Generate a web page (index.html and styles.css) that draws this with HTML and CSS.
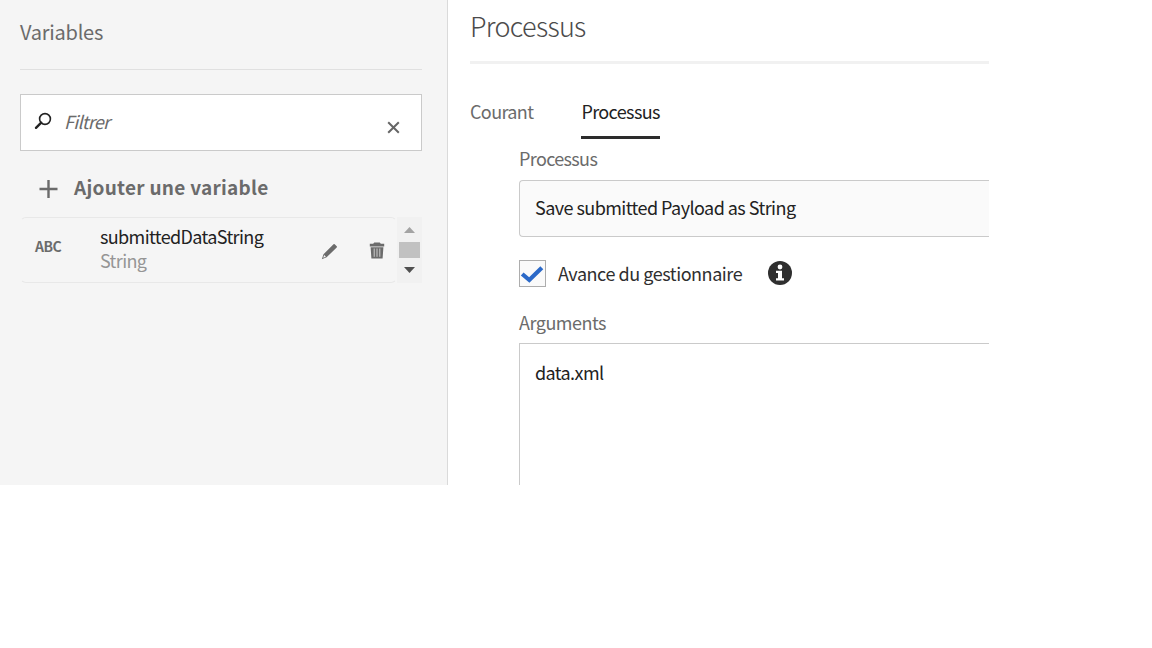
FILE: index.html
```html
<!DOCTYPE html>
<html lang="fr">
<head>
<meta charset="utf-8">
<title>Processus</title>
<link rel="stylesheet" href="styles.css">
</head>
<body>
<div class="app">
  <aside class="sidebar">
    <h2 class="sidebar-title"><span>Variables</span></h2>
    <div class="filter">
      <svg class="search-icon" width="18" height="18" viewBox="0 0 18 18"><circle cx="11" cy="7" r="5.4" fill="none" stroke="#222" stroke-width="1.6"/><path d="M7.2 10.7 2 15.8" stroke="#222" stroke-width="2.4" stroke-linecap="round"/></svg>
      <span class="filter-text">Filtrer</span>
      <svg class="clear-icon" width="13" height="13" viewBox="0 0 13 13"><path d="M1.2 1.2 11.8 11.8M11.8 1.2 1.2 11.8" stroke="#666" stroke-width="2"/></svg>
    </div>
    <button class="add"><svg width="20" height="20" viewBox="0 0 20 20"><path d="M10.5 1V19M1.5 10H19.5" stroke="#6b6b6b" stroke-width="2.4"/></svg><span>Ajouter une variable</span></button>
    <div class="list">
      <div class="item">
        <span class="type">ABC</span>
        <div class="names"><span class="name">submittedDataString</span><span class="kind">String</span></div>
        <svg class="edit" width="17" height="17" viewBox="0 0 17 17"><path fill="#6b6b6b" fill-rule="evenodd" d="M12.5 1.2q.6-.6 1.2 0l2 2q.6.6 0 1.2L5.6 14.3.8 16.2l1.7-5ZM3.2 12l-1 2.8 2.7-1.1Z"/></svg>
        <svg class="trash" width="16" height="17" viewBox="0 0 16 17"><path fill="#6b6b6b" d="M5.2.5h5.6l1 1.3h3.4v2.7H.8V1.8h3.4ZM1.6 5.2h12.8l-.8 11.3H2.4Z"/><path d="M5.2 6.5V14.8M8 6.5V14.8M10.8 6.5V14.8" stroke="#ccc" stroke-width="1"/></svg>
      </div>
      <div class="scrollbar">
        <svg width="11" height="6" viewBox="0 0 11 6"><path fill="#a3a3a3" d="M5.5 0 11 6H0Z"/></svg>
        <div class="thumb"></div>
        <svg width="11" height="6" viewBox="0 0 11 6"><path fill="#505050" d="M0 0H11L5.5 6Z"/></svg>
      </div>
    </div>
  </aside>
  <main class="main">
    <h1 class="title"><span>Processus</span></h1>
    <nav class="tabs"><a class="tab first">Courant</a><a class="tab active">Processus</a></nav>
    <section class="form">
      <label class="label">Processus</label>
      <div class="select">Save submitted Payload as String</div>
      <div class="check-row">
        <span class="checkbox"><svg width="25" height="25" viewBox="0 0 25 25"><path d="M2.2 13 9.3 19 21.8 6.8" fill="none" stroke="#2b69c8" stroke-width="4.2"/></svg></span>
        <span class="check-label">Avance du gestionnaire</span>
        <svg width="24" height="24" viewBox="0 0 24 24"><circle cx="12" cy="12" r="12" fill="#2f2f2f"/><circle cx="12" cy="6" r="2.4" fill="#fff"/><path fill="#fff" d="M8 9.8h6v7.4h2v2.3H8v-2.3h2v-5.1H8Z"/></svg>
      </div>
      <label class="label args">Arguments</label>
      <div class="textarea">data.xml</div>
    </section>
  </main>
</div>
</body>
</html>
```
FILE: styles.css
```css
* { box-sizing: border-box; }
body { margin: 0; background: #fff; font-family: "Noto Sans CJK SC", "Noto Sans", sans-serif; font-size: 18px; white-space: nowrap; }
svg { display: block; flex: none; }
.app { display: flex; width: 989px; height: 485px; overflow: hidden; }
.sidebar { width: 448px; flex: none; padding: 0 25px 0 20px; background: #f5f5f5; border-right: 1px solid #dadada; }
.sidebar-title { height: 70px; margin: 0; padding-top: 17px; border-bottom: 1px solid #e0e0e0; font-size: 20px; font-weight: 400; line-height: 30px; letter-spacing: -0.25px; color: #6b6b6b; }
.filter { display: flex; height: 57px; margin-top: 24px; padding: 0 21px 0 13px; border: 1px solid #cacaca; background: #fff; align-items: center; }
.search-icon { margin-top: -4px; }
.filter-text { flex: 1; margin: -4px 0 0 12px; font-style: italic; line-height: 24px; letter-spacing: -0.75px; color: #6b6b6b; }
.clear-icon { margin-top: 10px; }
.add { display: flex; align-items: center; height: 66px; width: 100%; padding: 9px 0 0 18px; gap: 16px; border: 0; background: none; font: 700 19px/28px "Noto Sans CJK SC", sans-serif; letter-spacing: 0.27px; color: #6b6b6b; }
.add span { margin-top: -4px; }
.list { display: flex; height: 66px; }
.item { display: flex; width: 377px; border: 1px solid transparent; border-top-color: #e8e8e8; border-bottom-color: #e8e8e8; border-radius: 6px; padding-left: 14px; }
.type { width: 65px; padding-top: 18px; font-size: 14px; font-weight: 700; line-height: 20px; letter-spacing: -0.5px; color: #6b6b6b; }
.names { display: flex; flex-direction: column; width: 221px; padding-top: 6px; line-height: 24px; letter-spacing: -0.62px; }
.name { color: #222; }
.kind { color: #959595; }
.edit { margin-top: 25px; }
.trash { margin: 24px 0 0 31px; }
.scrollbar { display: flex; flex-direction: column; align-items: center; justify-content: space-between; width: 25px; padding: 10px 0 10px; background: #f1f1f1; }
.thumb { width: 21px; height: 16px; background: #c1c1c1; }
.main { flex: 1; padding-left: 22px; }
.title { height: 64px; margin: 0; padding-top: 6px; border-bottom: 3px solid #f1f1f1; font-size: 27px; font-weight: 300; line-height: 40px; letter-spacing: -0.7px; color: #4b4b4b; }
.tabs { display: flex; gap: 48px; height: 75px; padding-top: 33px; letter-spacing: -0.62px; }
.tab { height: 42px; line-height: 28px; color: #6b6b6b; }
.active { color: #222; border-bottom: 3px solid #2c2c2c; }
.form { margin-left: 49px; }
.label { display: block; height: 41px; line-height: 38px; letter-spacing: -0.65px; color: #6b6b6b; }
.select { height: 57px; padding-left: 15px; border: 1px solid #cacaca; border-right: 0; border-radius: 4px 0 0 4px; background: #fafafa; color: #222; line-height: 52px; letter-spacing: -0.55px; }
.check-row { display: flex; align-items: center; height: 73px; padding-bottom: 1px; }
.checkbox { width: 27px; height: 27px; border: 1px solid #adadad; background: #fafafa; }
.check-label { width: 210px; margin-left: 12px; letter-spacing: -0.45px; color: #2f2f2f; }
.args { height: 33px; line-height: 24px; letter-spacing: -0.5px; }
.textarea { height: 160px; padding: 14px 15px; border: 1px solid #cacaca; border-right: 0; color: #222; line-height: 28px; letter-spacing: -0.6px; }
```
